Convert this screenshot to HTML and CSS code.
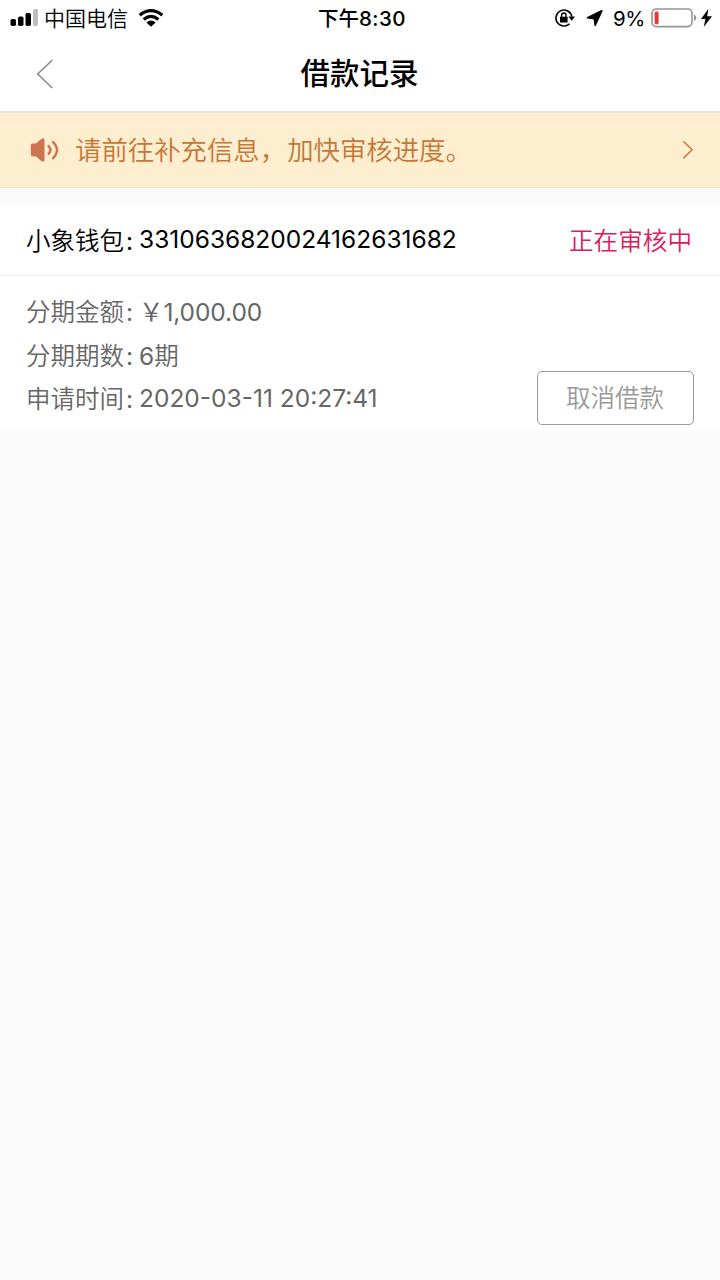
FILE: index.html
```html
<!DOCTYPE html>
<html lang="zh-CN">
<head>
<meta charset="utf-8">
<title>借款记录</title>
<link rel="stylesheet" href="styles.css">
</head>
<body>
<div class="status">
  <div class="status-left">
    <svg class="signal" width="28" height="18" viewBox="0 0 28 18"><rect x="0.5" y="10" width="5.5" height="7" rx="1.7"/><rect x="8" y="7.5" width="5.5" height="9.5" rx="1.7"/><rect x="15.5" y="4" width="5.5" height="13" rx="1.7"/><rect class="weak" x="23" y="0" width="5" height="17" rx="1.7"/></svg>
    <span class="carrier">中国电信</span>
    <svg class="wifi" width="26" height="18" viewBox="0 0 26 18"><path d="M1.7 6.2Q13-2.8 24.3 6.2M5.7 10.4Q13 4.4 20.3 10.4" fill="none" stroke="#000" stroke-width="3.2"/><path d="M8.4 13.5Q13 9.7 17.6 13.5L13 17.7Z"/></svg>
  </div>
  <div class="clock">下午<span class="digits">8:30</span></div>
  <div class="status-right">
    <svg class="lock" width="20" height="18" viewBox="0 0 20 18"><path d="M14.500 14.800A8 8 0 1 1 16.800 7.500" fill="none" stroke="#000" stroke-width="1.600"/><path d="M13.400 7.400h6.600l-3.200 4.300zM5 7.800h7.600v5.700H5z"/><path d="M6.600 8V6.200a2.200 2.200 0 0 1 4.400 0V8" fill="none" stroke="#000" stroke-width="1.400"/></svg>
    <svg class="arrow" width="18" height="18" viewBox="0 0 18 18"><path d="M15.800 1.800 1.500 8.800 8.300 9.700 9.200 16.500Z" stroke="#000" stroke-width="1.600" stroke-linejoin="round"/></svg>
    <span class="percent">9%</span>
    <svg class="battery" width="46" height="20" viewBox="0 0 46 20"><rect x="1" y="1" width="40" height="17.600" rx="4.300" fill="none" stroke="#949494" stroke-width="1.600"/><path d="M43 6.500q2.300 1 2.300 3.300T43 13.100z" fill="#949494"/><rect x="3.600" y="3.600" width="4" height="12.600" rx="1.500" fill="#e53935"/></svg>
    <svg class="bolt" width="11" height="18" viewBox="0 0 11 18"><path d="M7.300 0 0 10h4.400L2.700 18 11 7.300H6.200z"/></svg>
  </div>
</div>
<header class="nav">
  <svg class="back" width="18" height="30" viewBox="0 0 18 30"><path d="M16.300 1 1.700 15l14.600 14" fill="none" stroke="#8b8b8b" stroke-width="1.600"/></svg>
  <h1 class="title">借款记录</h1>
</header>
<div class="banner">
  <svg class="speaker" width="30" height="26" viewBox="0 0 30 26"><path d="M2.500 6.500H6L11.300 2Q14.500.2 14.500 3v20q0 2.800-3.200 1L6 19.500H3.500Q.8 19.500.8 17V8.500Q.8 6.500 2.500 6.500z" fill="#cb7550"/><path d="M17.800 8.600q5.500 4.300 0 8.800M22.300 4.300q9.500 8.700 0 17.600" fill="none" stroke="#cb7550" stroke-width="2.500"/></svg>
  <span class="notice">请前往补充信息，<span class="clause">加快审核进度。</span></span>
  <svg class="go" width="12" height="20" viewBox="0 0 12 20"><path d="m1.300 1.200 8.800 8.600-8.800 8.600" fill="none" stroke="#c77a38" stroke-width="1.500"/></svg>
</div>
<main class="card">
  <div class="card-head">
    <div class="row order"><span class="label">小象钱包<span class="colon">:</span></span><span class="value number">3310636820024162631682</span></div>
    <span class="state">正在审核中</span>
  </div>
  <div class="card-body">
    <div class="details">
      <div class="row"><span class="label">分期金额<span class="colon">:</span></span><span class="value amount"><span class="yen">￥</span>1,000.00</span></div>
      <div class="row"><span class="label">分期期数<span class="colon">:</span></span><span class="value">6<span class="unit">期</span></span></div>
      <div class="row"><span class="label">申请时间<span class="colon">:</span></span><span class="value time">2020-03-11 20:27:41</span></div>
    </div>
    <button class="cancel">取消借款</button>
  </div>
</main>
</body>
</html>
```
FILE: styles.css
```css
* { box-sizing: border-box; }
body {
  margin: 0;
  min-height: 1280px;
  background: #fafafa;
  color: #000;
  font-family: Inter, "Noto Sans CJK SC", sans-serif;
}
svg { display: block; flex: none; }
span, h1 { white-space: nowrap; }
.status {
  display: grid;
  grid-template-columns: 1fr auto 1fr;
  align-items: center;
  height: 37px;
  padding: 0 8px 0 10px;
  background: #fff;
}
.status-left, .status-right { display: flex; align-items: center; }
.status-right { justify-content: flex-end; }
.signal { margin-bottom: 1px; }
.weak { fill: #bdbdbd; }
.carrier { margin-left: 6px; font-size: 21px; font-weight: 350; line-height: 36px; }
.wifi { margin-left: 10px; margin-bottom: 2px; }
.clock { padding-left: 2px; font-size: 20.500px; font-weight: 500; line-height: 36px; }
.digits { font-weight: 550; letter-spacing: 0.5px; }
.lock { margin-bottom: 1px; }
.arrow { margin-left: 11px; margin-bottom: 1px; }
.percent { margin-left: 9px; font-size: 20.500px; line-height: 36px; letter-spacing: -0.400px; }
.battery { margin-left: 6px; margin-bottom: 2px; }
.bolt { margin-left: 4px; margin-bottom: 2px; }
.nav {
  display: grid;
  grid-template-columns: 1fr auto 1fr;
  align-items: center;
  height: 76px;
  padding: 0 37px 0 36px;
  background: #fff;
  border-bottom: 2px solid #e3e3e1;
}
.title { margin: 0; font-size: 29.500px; font-weight: 500; line-height: 72px; padding-bottom: 2px; }
.banner {
  display: flex;
  align-items: center;
  height: 75px;
  padding: 0 26px 0 30px;
  background: #feeed0;
  border-bottom: 1px solid #f1e8d8;
}
.notice { margin-left: 15px; color: #c67735; font-size: 26.400px; font-weight: 350; line-height: 74px; }
.clause { margin-left: 1px; }
.go { margin-left: auto; }
.card { margin-top: 17px; height: 226px; background: #fff; }
.card-head {
  display: flex;
  justify-content: space-between;
  align-items: center;
  height: 71px;
  padding: 0 28px 2px 26px;
  border-bottom: 1px solid #e9e9e9;
}
.row { display: flex; align-items: center; height: 43.500px; font-size: 24.500px; }
.label { width: 113px; font-weight: 350; }
.colon { margin-left: 2px; font-weight: 400; }
.unit { font-weight: 350; }
.state { color: #dc1b5c; font-size: 24.600px; font-weight: 350; }
.card-body {
  display: flex;
  justify-content: space-between;
  align-items: flex-end;
  height: 155px;
  padding: 13px 26px 6px;
}
.details { align-self: flex-start; color: #666; }
.amount { letter-spacing: -0.100px; }
.cancel {
  width: 157px;
  height: 54px;
  padding: 0 1px 0 0;
  border: 1px solid #999;
  border-radius: 5px;
  background: #fff;
  color: #999;
  font: 350 24.500px/52px Inter, "Noto Sans CJK SC", sans-serif;
}
```
